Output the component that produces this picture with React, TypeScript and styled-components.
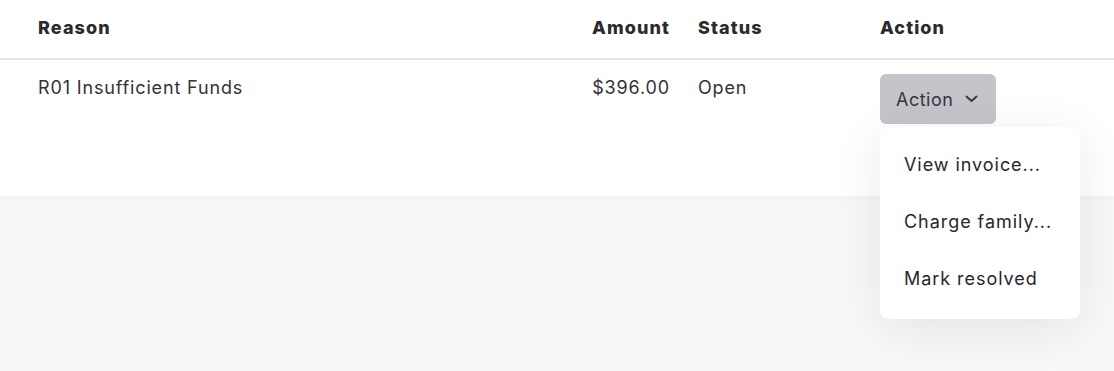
import React from "react";
import styled, { createGlobalStyle } from "styled-components";

const Global = createGlobalStyle`
  html, body { margin: 0; padding: 0; }
  body {
    background: #f8f8f8;
    font-family: Inter, "Noto Sans", "Liberation Sans", sans-serif;
    -webkit-font-smoothing: antialiased;
  }
`;

const Page = styled.div`
  width: 1114px;
  height: 371px;
  overflow: hidden;
  background: #f8f8f8;
`;

const Card = styled.div`
  background: #ffffff;
  height: 196px;
  box-shadow: 0 2px 14px rgba(0, 0, 0, 0.035);
  position: relative;
  z-index: 1;
`;

const Row = styled.div<{ $head?: boolean }>`
  display: grid;
  grid-template-columns: 1fr 140px 182px 248px;
  padding-left: 24px;
  height: ${(p) => (p.$head ? "58px" : "auto")};
  align-items: ${(p) => (p.$head ? "center" : "start")};
  border-bottom: ${(p) => (p.$head ? "2px solid #e4e3e8" : "none")};
`;

const Cell = styled.div<{ $head?: boolean; $right?: boolean }>`
  padding: ${(p) => (p.$head ? "0 14px 3px" : "16px 14px 0")};
  text-align: ${(p) => (p.$right ? "right" : "left")};
  font-size: 18px;
  line-height: 24px;
  letter-spacing: ${(p) => (p.$head ? "1.1px" : "0.85px")};
  font-weight: ${(p) => (p.$head ? 800 : 400)};
  color: ${(p) => (p.$head ? "#2b2b2b" : "#333238")};
  white-space: nowrap;
`;

const ActionCell = styled.div`
  padding: 14px 14px 0;
  position: relative;
`;

const ActionButton = styled.button`
  display: flex;
  align-items: center;
  gap: 12px;
  height: 50px;
  width: 116px;
  padding: 0 16px;
  border: none;
  border-radius: 6px;
  background: #c5c4ca;
  color: #37363c;
  font-family: inherit;
  font-size: 18px;
  letter-spacing: 0.5px;
  cursor: pointer;
`;

const Menu = styled.div`
  position: absolute;
  top: 67px;
  left: 14px;
  width: 200px;
  box-sizing: border-box;
  padding: 9px 0 12px;
  background: #ffffff;
  border-radius: 8px;
  box-shadow: 0 10px 50px rgba(30, 25, 50, 0.09);
`;

const MenuItem = styled.div`
  height: 57px;
  display: flex;
  align-items: center;
  padding-left: 24px;
  font-size: 18px;
  letter-spacing: 0.95px;
  color: #2a2430;
  white-space: nowrap;
`;

const Chevron = () => (
  <svg width="13" height="8" viewBox="0 0 13 8" fill="none">
    <path d="M1.5 1.5 L6.5 6 L11.5 1.5" stroke="#37363c" strokeWidth="1.8" strokeLinecap="round" strokeLinejoin="round" />
  </svg>
);

export default function App() {
  return (
    <Page>
      <Global />
      <Card>
        <Row $head>
          <Cell $head>Reason</Cell>
          <Cell $head $right>Amount</Cell>
          <Cell $head>Status</Cell>
          <Cell $head>Action</Cell>
        </Row>
        <Row>
          <Cell>R01 Insufficient Funds</Cell>
          <Cell $right>$396.00</Cell>
          <Cell>Open</Cell>
          <ActionCell>
            <ActionButton>
              Action
              <Chevron />
            </ActionButton>
            <Menu>
              <MenuItem>View invoice...</MenuItem>
              <MenuItem>Charge family...</MenuItem>
              <MenuItem>Mark resolved</MenuItem>
            </Menu>
          </ActionCell>
        </Row>
      </Card>
    </Page>
  );
}
